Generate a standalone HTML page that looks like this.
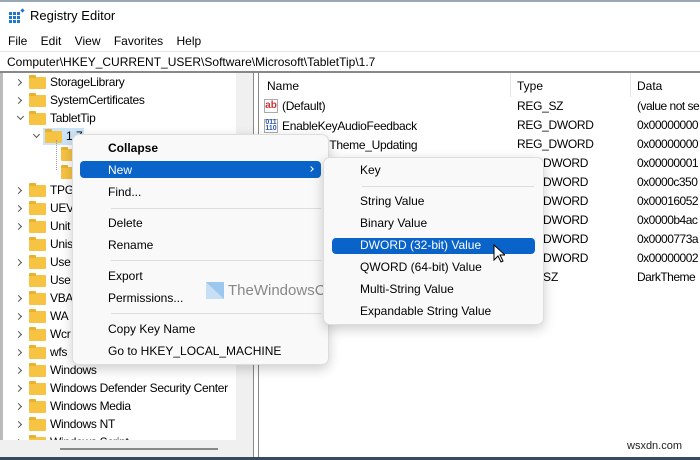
<!DOCTYPE html><html><head><style>
*{margin:0;padding:0;box-sizing:border-box}
body{width:700px;height:460px;overflow:hidden;background:#fff;font-family:"Liberation Sans",sans-serif;font-size:12px;color:#000;position:relative}
.a{position:absolute;white-space:nowrap}
.f{position:absolute;width:17px;height:12px;background:#f6c342;border-radius:1px}
.f:before{content:"";position:absolute;left:0;top:-2px;width:7px;height:3px;background:#e9b22e;border-radius:1px 1px 0 0}
.ch{position:absolute;width:5px;height:5px;border-right:1.2px solid #555;border-top:1.2px solid #555;transform:rotate(45deg)}
.cd{position:absolute;width:5px;height:5px;border-right:1.2px solid #555;border-bottom:1.2px solid #555;transform:rotate(45deg)}
.m{position:absolute;background:#f9f9f9;border:1px solid #ddd;border-radius:7px;box-shadow:0 4px 12px rgba(0,0,0,.2);z-index:5}
.sep{position:absolute;height:1px;background:#ddd}
.t{letter-spacing:-0.3px}
.d{letter-spacing:-0.5px}
</style></head><body>
<div class="a" style="left:0;top:0;width:700px;height:2px;background:#9aa7b4"></div>
<svg class="a" style="left:9px;top:8px" width="16" height="15"><rect x="0" y="4" width="3" height="3" fill="#1d78c9"/><rect x="4" y="4" width="3" height="3" fill="#1d78c9"/><rect x="8" y="4" width="3" height="3" fill="#1d78c9"/><rect x="0" y="8" width="3" height="3" fill="#1d78c9"/><rect x="4" y="8" width="3" height="3" fill="#1d78c9"/><rect x="8" y="8" width="3" height="3" fill="#1d78c9"/><rect x="0" y="12" width="3" height="3" fill="#1d78c9"/><rect x="4" y="12" width="3" height="3" fill="#1d78c9"/><rect x="8" y="12" width="3" height="3" fill="#1d78c9"/><rect x="12" y="1" width="3" height="3" fill="#1d78c9" transform="rotate(45 13.5 2.5)"/></svg>
<div class="a" style="left:30px;top:8px;font-size:13px">Registry Editor</div>
<div class="a" style="left:8px;top:34px">File&nbsp;&nbsp;&nbsp;&nbsp;Edit&nbsp;&nbsp;&nbsp;&nbsp;View&nbsp;&nbsp;&nbsp;&nbsp;Favorites&nbsp;&nbsp;&nbsp;&nbsp;Help</div>
<div class="a" style="left:0;top:51px;width:700px;height:1px;background:#e6e6e6"></div>
<div class="a" style="left:7px;top:55px">Computer\HKEY_CURRENT_USER\Software\Microsoft\TabletTip\1.7</div>
<div class="a" style="left:0;top:71px;width:700px;height:2px;background:#888"></div>
<div class="a" style="left:0;top:73px;width:3px;height:387px;background:#bbb"></div>
<div class="a" style="left:43px;top:128px;width:41px;height:17px;background:#cce4f7"></div>
<div class="ch" style="left:16px;top:80px"></div><div class="f" style="left:29px;top:77px"></div><div class="a t" style="left:50px;top:75px">StorageLibrary</div>
<div class="ch" style="left:16px;top:98px"></div><div class="f" style="left:29px;top:95px"></div><div class="a t" style="left:50px;top:93px">SystemCertificates</div>
<div class="cd" style="left:18px;top:114px"></div><div class="f" style="left:29px;top:113px"></div><div class="a t" style="left:50px;top:111px">TabletTip</div>
<div class="cd" style="left:34px;top:132px"></div><div class="f" style="left:45px;top:131px"></div><div class="a" style="left:66px;top:129px">1.7</div>
<div class="f" style="left:61px;top:149px"></div><div class="f" style="left:61px;top:167px"></div>
<div class="a" style="left:56px;top:140px;width:1px;height:30px;border-left:1px dotted #999"></div>
<script>
var n=["TPG","UEV","Unit","Unis","Use","Use","VBA","WA","Wcr","wfs","Windows","Windows Defender Security Center","Windows Media","Windows NT","Windows Script"];
var h="";for(var i=0;i<n.length;i++){var y=183+i*18;if(i!=3&&i!=5)h+='<div class="ch" style="left:16px;top:'+(y+5)+'px"></div>';h+='<div class="f" style="left:29px;top:'+(y+2)+'px"></div><div class="a t" style="left:50px;top:'+y+'px">'+n[i]+'</div>';}
document.write(h);
</script>
<div class="a" style="left:236px;top:73px;width:17px;height:387px;background:#f0f0f0;z-index:2"></div>
<div class="a" style="left:0;top:440px;width:253px;height:20px;background:#f0f0f0;z-index:2"></div>
<div class="a" style="left:60px;top:448px;width:158px;height:2px;background:#888;z-index:2"></div>
<div class="a" style="left:253px;top:73px;width:1px;height:387px;background:#888"></div>
<div class="a" style="left:258px;top:73px;width:1px;height:387px;background:#888"></div>
<div class="a" style="left:0;top:457px;width:700px;height:3px;background:#3a4a5e;z-index:3"></div>
<div class="a" style="left:267px;top:79px">Name</div>
<div class="a" style="left:510px;top:73px;width:1px;height:24px;background:#e5e5e5"></div>
<div class="a" style="left:517px;top:79px">Type</div>
<div class="a" style="left:630px;top:73px;width:1px;height:24px;background:#e5e5e5"></div>
<div class="a" style="left:637px;top:79px">Data</div>
<div class="a" style="left:264px;top:99px;width:14px;height:14px;border:1px solid #aaa;color:#c33;font-size:10px;font-weight:bold;line-height:12px;text-align:center">ab</div>
<div class="a t" style="left:282px;top:99px">(Default)</div>
<div class="a" style="left:264px;top:119px;width:14px;height:14px;border:1px solid #aaa;color:#2a5ab8;font-size:7px;font-weight:bold;line-height:6px;text-align:center">011<br>110</div>
<div class="a t" style="left:282px;top:119px">EnableKeyAudioFeedback</div>
<div class="a t" style="left:323px;top:138px">dTheme_Updating</div>
<script>
var t=["REG_SZ","REG_DWORD","REG_DWORD"],d=["(value not se","0x00000000","0x00000000","0x00000001","0x0000c350","0x00016052","0x0000b4ac","0x0000773a","0x00000002","DarkTheme"];
var h="";for(var i=0;i<10;i++){var y=99+i*19;if(i<3)h+='<div class="a t" style="left:517px;top:'+y+'px">'+t[i]+'</div>';else if(i<9)h+='<div class="a t" style="left:543px;top:'+y+'px">DWORD</div>';else h+='<div class="a" style="left:543px;top:'+y+'px">SZ</div>';h+='<div class="a d" style="left:637px;top:'+y+'px">'+d[i]+'</div>';}
document.write(h);
</script>
<svg class="a" style="left:206px;top:282px;z-index:6" width="18" height="17"><rect width="18" height="17" fill="#9cc7ee"/><path d="M0 0L18 17H0Z" fill="#c6dff5"/></svg>
<div class="a" style="left:228px;top:282px;font-size:15px;color:#888;z-index:6">TheWindowsClub</div>
<div class="m" style="left:72px;top:134px;width:257px;height:231px">
<div class="a" style="left:7px;top:26px;width:241px;height:17px;background:#0a63c9;border-radius:4px"></div>
<div class="ch" style="left:236px;top:32px;border-color:#fff;width:4px;height:4px"></div>
<div class="a" style="left:35px;top:6px;font-weight:bold">Collapse</div>
<div class="a" style="left:35px;top:28px;color:#fff">New</div>
<div class="a" style="left:35px;top:50px">Find...</div>
<div class="sep" style="left:38px;top:73px;width:210px"></div>
<div class="a" style="left:35px;top:81px">Delete</div>
<div class="a" style="left:35px;top:103px">Rename</div>
<div class="sep" style="left:38px;top:125px;width:210px"></div>
<div class="a" style="left:35px;top:134px">Export</div>
<div class="a" style="left:35px;top:156px">Permissions...</div>
<div class="sep" style="left:38px;top:178px;width:210px"></div>
<div class="a" style="left:35px;top:187px">Copy Key Name</div>
<div class="a" style="left:35px;top:209px">Go to HKEY_LOCAL_MACHINE</div>
</div>
<div class="m" style="left:323px;top:157px;width:221px;height:168px;z-index:7">
<div class="a" style="left:36px;top:5px">Key</div>
<div class="sep" style="left:38px;top:28px;width:172px"></div>
<div class="a" style="left:36px;top:36px">String Value</div>
<div class="a" style="left:36px;top:58px">Binary Value</div>
<div class="a" style="left:8px;top:80px;width:203px;height:16px;background:#0a63c9;border-radius:4px"></div>
<div class="a" style="left:36px;top:80px;color:#fff">DWORD (32-bit) Value</div>
<div class="a" style="left:36px;top:102px">QWORD (64-bit) Value</div>
<div class="a" style="left:36px;top:124px">Multi-String Value</div>
<div class="a" style="left:36px;top:146px">Expandable String Value</div>
</div>
<svg class="a" style="left:493px;top:244px;z-index:8" width="12" height="20"><path d="M1 1V16L5 12L8 18L10 17L7 11H12Z" fill="#fff" stroke="#000" stroke-width="1"/></svg>
<div class="a" style="left:627px;top:440px;font-size:11px;color:#222">wsxdn.com</div>
</body></html>
